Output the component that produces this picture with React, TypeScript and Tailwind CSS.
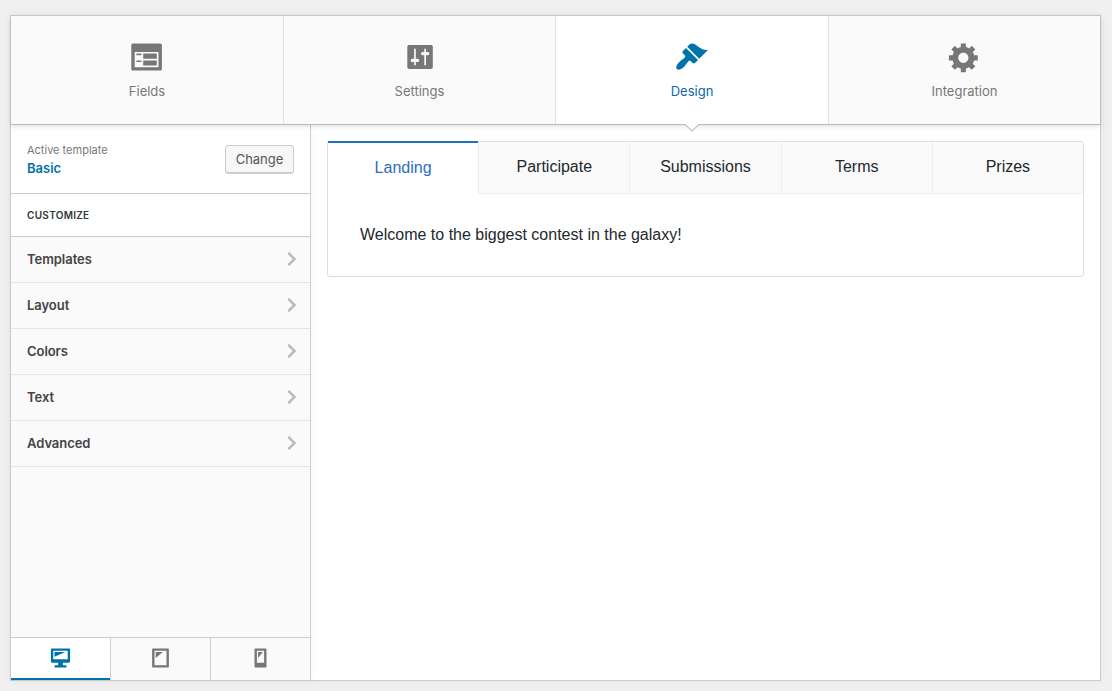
import React from "react";

const icons = {
  fields:
    "M2 2h16c.55 0 1 .45 1 1v14c0 .55-.45 1-1 1H2c-.55 0-1-.45-1-1V3c0-.55.45-1 1-1zm15 14V7H3v9h14zM4 8v1h3V8H4zm4 0v3h8V8H8zm-4 4v1h3v-1H4zm4 0v3h8v-3H8z",
  settings:
    "M18 16V4c0-.55-.45-1-1-1H4c-.55 0-1 .45-1 1v12c0 .55.45 1 1 1h13c.55 0 1-.45 1-1zM8 11h1c.55 0 1 .45 1 1s-.45 1-1 1H8v1.5c0 .28-.22.5-.5.5s-.5-.22-.5-.5V13H6c-.55 0-1-.45-1-1s.45-1 1-1h1V5.5c0-.28.22-.5.5-.5s.5.22.5.5V11zm5-2h-1c-.55 0-1-.45-1-1s.45-1 1-1h1V5.5c0-.28.22-.5.5-.5s.5.22.5.5V7h1c.55 0 1 .45 1 1s-.45 1-1 1h-1v5.5c0 .28-.22.5-.5.5s-.5-.22-.5-.5V9z",
  design:
    "M14.48 11.06L7.41 3.99l1.5-1.5c.5-.56 2.3-.47 3.51.32 1.21.8 1.43 1.28 2.91 2.1 1.18.64 2.45 1.26 4.45.85zm-.71.71L6.7 4.7 4.93 6.47c-.39.39-.39 1.02 0 1.41l1.06 1.06c.39.39.39 1.03 0 1.42-.6.6-1.43 1.11-2.21 1.69-.35.26-.7.53-1.01.84C1.43 14.23.4 16.08 1.4 17.07c.99 1 2.84-.03 4.18-1.36.31-.31.58-.66.85-1.02.57-.78 1.08-1.61 1.69-2.21.39-.39 1.02-.39 1.41 0l1.06 1.06c.39.39 1.02.39 1.41 0z",
  integration:
    "M18 12h-2.18c-.17.7-.44 1.35-.81 1.93l1.54 1.54-2.1 2.1-1.54-1.54c-.58.36-1.23.63-1.91.79V19H8v-2.18c-.68-.16-1.33-.43-1.91-.79l-1.54 1.54-2.12-2.12 1.54-1.54c-.36-.58-.63-1.23-.79-1.91H1V9.03h2.17c.16-.7.44-1.35.8-1.94L2.43 5.55l2.1-2.1 1.54 1.54c.58-.37 1.24-.64 1.93-.81V2h3v2.18c.68.16 1.33.43 1.91.79l1.54-1.54 2.12 2.12-1.54 1.54c.36.59.64 1.24.8 1.94H18V12zm-8.5 1.5c1.66 0 3-1.34 3-3s-1.34-3-3-3-3 1.34-3 3 1.34 3 3 3z",
  chevron: "M6 15l5-5-5-5 1-2 7 7-7 7z",
  desktop:
    "M3 2h14c.55 0 1 .45 1 1v10c0 .55-.45 1-1 1h-5v2h2c.55 0 1 .45 1 1v1H5v-1c0-.55.45-1 1-1h2v-2H3c-.55 0-1-.45-1-1V3c0-.55.45-1 1-1zm13 9V4H4v7h12zM5 5h9L5 9V5z",
  tablet:
    "M4 2h12c.55 0 1 .45 1 1v14c0 .55-.45 1-1 1H4c-.55 0-1-.45-1-1V3c0-.55.45-1 1-1zm11 14V4H5v12h10zM6 5h6l-6 5V5z",
  phone:
    "M6 2h8c.55 0 1 .45 1 1v14c0 .55-.45 1-1 1H6c-.55 0-1-.45-1-1V3c0-.55.45-1 1-1zm7 12V4H7v10h6zM8 5h4l-4 5V5z",
};

function Icon({ name, className }: { name: keyof typeof icons; className: string }) {
  return (
    <svg viewBox="0 0 20 20" fill="currentColor" fillRule="evenodd" className={className}>
      <path d={icons[name]} />
    </svg>
  );
}

const mainTabs = [
  { label: "Fields", icon: "fields", nudge: "-translate-x-[0.4px]" },
  { label: "Settings", icon: "settings", nudge: "-translate-x-[0.8px]" },
  { label: "Design", icon: "design", nudge: "-translate-x-[0.4px]" },
  { label: "Integration", icon: "integration", nudge: "-translate-x-[0.8px]" },
] as const;

function MainTabs() {
  return (
    <nav className="relative z-10 grid h-[109px] shrink-0 grid-cols-[272px_272px_273px_272px] border-b border-[#bbb] bg-[#fafafa] shadow-[0_1px_5px_rgba(0,0,0,0.15)]">
      {mainTabs.map((tab, i) => {
        const active = tab.label === "Design";
        return (
          <button
            key={tab.label}
            className={`relative flex flex-col items-center pt-6 text-[13px] leading-5 ${
              i > 0 ? "border-l border-[#e0e0e0]" : ""
            } ${active ? "bg-white text-[#0073aa]" : "text-[#777]"}`}
          >
            <Icon name={tab.icon} className={`size-[34px] ${tab.nudge}`} />
            <span className={active ? "mt-[7px] text-[#0a69a6]" : "mt-[7px]"}>{tab.label}</span>
            {active && (
              <svg viewBox="0 0 16 8" className="absolute -bottom-[8px] left-1/2 h-2 w-4 -translate-x-1/2">
                <path d="M1 0h14L8 7z" fill="#fff" />
                <path d="M1 .3L8 7l7-6.700" fill="none" stroke="#c4c4c4" strokeWidth="1.2" />
              </svg>
            )}
          </button>
        );
      })}
    </nav>
  );
}

const sections = ["Templates", "Layout", "Colors", "Text", "Advanced"];
const devices = ["desktop", "tablet", "phone"] as const;

function Sidebar() {
  return (
    <aside className="flex w-[300px] shrink-0 flex-col border-r border-[#ccc] bg-[#fafafa] shadow-[0_0_10px_rgba(0,0,0,0.04)]">
      <div className="flex h-[69px] items-center justify-between border-b border-[#ccc] bg-white pr-4 pl-4">
        <div>
          <div className="text-[11px] leading-[18px] text-[#777]">Active template</div>
          <div className="text-[13px] leading-[18px] font-semibold text-[#0073aa]">Basic</div>
        </div>
        <button className="mt-px h-[29px] w-[69px] rounded-[3px] border border-[#ccc] bg-[#f7f7f7] pb-px text-[13px] leading-[26px] text-[#555] shadow-[inset_0_-1px_0_#ccc]">
          Change
        </button>
      </div>
      <h2 className="flex h-[43px] items-center border-b border-[#ccc] bg-white pl-4 text-[10px] font-semibold tracking-[0.3px] text-[#32373c] uppercase">
        Customize
      </h2>
      <ul>
        {sections.map((s) => (
          <li
            key={s}
            className="flex h-[46px] items-center justify-between border-b border-[#e5e5e5] pr-2 pl-4 text-[13px] font-semibold tracking-[-0.05px] text-[#444]"
          >
            {s}
            <Icon name="chevron" className="mb-px size-5 stroke-[#bbb] stroke-[0.6] text-[#bbb]" />
          </li>
        ))}
      </ul>
      <div className="-mr-px mt-auto flex h-[43px] border-t border-[#ccc]">
        {devices.map((d) => (
          <button
            key={d}
            className={`flex w-[100px] shrink-0 justify-center pt-2 ${d !== "phone" ? "border-r border-[#ccc]" : "pr-px"} ${
              d === "desktop" ? "bg-white text-[#0073aa] shadow-[inset_0_-2px_0_#0073aa]" : "text-[#777]"
            }`}
          >
            <Icon name={d} className="size-6 -translate-x-[0.5px]" />
          </button>
        ))}
      </div>
    </aside>
  );
}

const pages = ["Landing", "Participate", "Submissions", "Terms", "Prizes"];

function Preview() {
  return (
    <main className="flex-1 p-4">
      <section className="h-[136px] rounded-[3px] border border-[#ddd] font-['Liberation_Sans',sans-serif] text-base text-[#23282d]">
        <div className="-ml-px grid h-[52px] grid-cols-5">
          {pages.map((p, i) => (
            <button
              key={p}
              className={
                i === 0
                  ? "relative ml-px pb-px text-[#2a6ebb] before:absolute before:inset-x-0 before:-top-px before:h-0.5 before:bg-[#1e73be]"
                  : `border-b border-l border-[#eee] bg-[#fafafa] pb-0.5 ${i === 4 ? "rounded-tr-[2px]" : ""}`
              }
            >
              {p}
            </button>
          ))}
        </div>
        <p className="pt-[29px] pl-8 leading-6">Welcome to the biggest contest in the galaxy!</p>
      </section>
    </main>
  );
}

export default function App() {
  return (
    <div className="h-[691px] w-[1112px] overflow-hidden bg-[#f0f0f0] pt-[15px] pl-2.5 font-['Inter',sans-serif]">
      <div className="flex h-[666px] w-[1091px] flex-col border border-[#ccc] bg-white shadow-[0_0_10px_rgba(0,0,0,0.04)]">
        <MainTabs />
        <div className="flex min-h-0 flex-1">
          <Sidebar />
          <Preview />
        </div>
      </div>
    </div>
  );
}
